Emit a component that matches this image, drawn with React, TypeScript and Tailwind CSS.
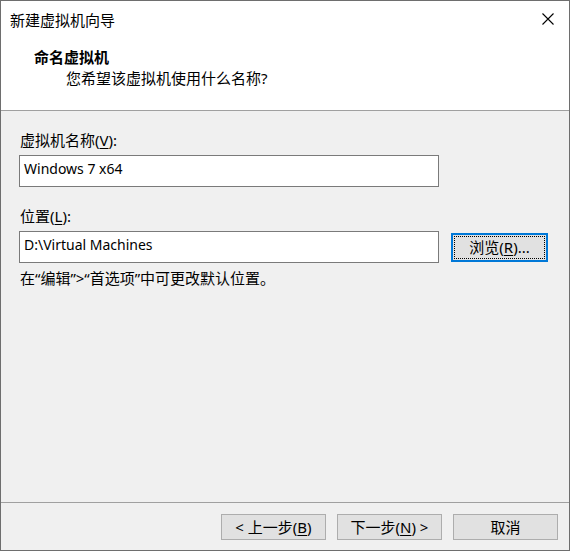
import React from 'react';

const font = "font-['Noto_Sans','Noto_Sans_CJK_SC',sans-serif]";

function Key({ k }: { k: string }) {
  return <span className="underline underline-offset-2 decoration-1">{k}</span>;
}

function FooterButton({ children }: { children: React.ReactNode }) {
  return (
    <button className="w-[105px] h-[26px] border border-[#adadad] bg-[#e1e1e1] text-[15px] leading-[20px] text-black flex items-center justify-center">
      {children}
    </button>
  );
}

export default function App() {
  return (
    <div className={`${font} w-[570px] h-[551px] border border-[#6e6e6e] flex flex-col text-[15px] leading-[20px] text-black bg-[#f0f0f0]`}>
      {/* Title bar + header */}
      <div className="bg-white border-b border-[#a0a0a0] h-[110px] flex flex-col">
        <div className="h-[37px] flex items-center justify-between pl-[9px] pr-[15px]">
          <span>新建虚拟机向导</span>
          <svg width="12" height="12" viewBox="0 0 12 12" className="mt-[-1px]">
            <path d="M0.5 0.5 L11.5 11.5 M11.5 0.5 L0.5 11.5" stroke="#000" strokeWidth="1.1" fill="none" />
          </svg>
        </div>
        <div className="pt-[9px]">
          <div className="pl-[33px] font-bold">命名虚拟机</div>
          <div className="pl-[65px] mt-[1px]">您希望该虚拟机使用什么名称?</div>
        </div>
      </div>

      {/* Body */}
      <div className="flex-1 pl-[18px] pt-[19px]">
        <div className="pl-[1px]">
          虚拟机名称(<Key k="V" />):
        </div>
        <div className="mt-[5px] w-[420px] h-[32px] border border-[#7a7a7a] bg-white flex items-center pl-[4px] pb-[4px] text-[14px]">
          Windows 7 x64
        </div>

        <div className="mt-[19px] pl-[1px]">
          位置(<Key k="L" />):
        </div>
        <div className="mt-[5px] flex items-center gap-[12px]">
          <div className="w-[420px] h-[32px] border border-[#7a7a7a] bg-white flex items-center pl-[4px] pb-[4px] text-[14px]">
            D:\Virtual Machines
          </div>
          <button className="w-[97px] h-[29px] border-2 border-[#0078d7] bg-[#e1e1e1] p-[1px]">
            <div className="h-full border border-dotted border-black flex items-center justify-center pb-[1px]">
              浏览(<Key k="R" />)...
            </div>
          </button>
        </div>

        <div className="mt-[5px] pl-[1px]">在“编辑”&gt;“首选项”中可更改默认位置。</div>
      </div>

      {/* Footer */}
      <div className="h-[48px] border-t border-[#a0a0a0] pt-[11px] pr-[11px] flex justify-end gap-[11px]">
        <FooterButton>
          &lt; 上一步(<Key k="B" />)
        </FooterButton>
        <FooterButton>
          下一步(<Key k="N" />) &gt;
        </FooterButton>
        <FooterButton>取消</FooterButton>
      </div>
    </div>
  );
}
